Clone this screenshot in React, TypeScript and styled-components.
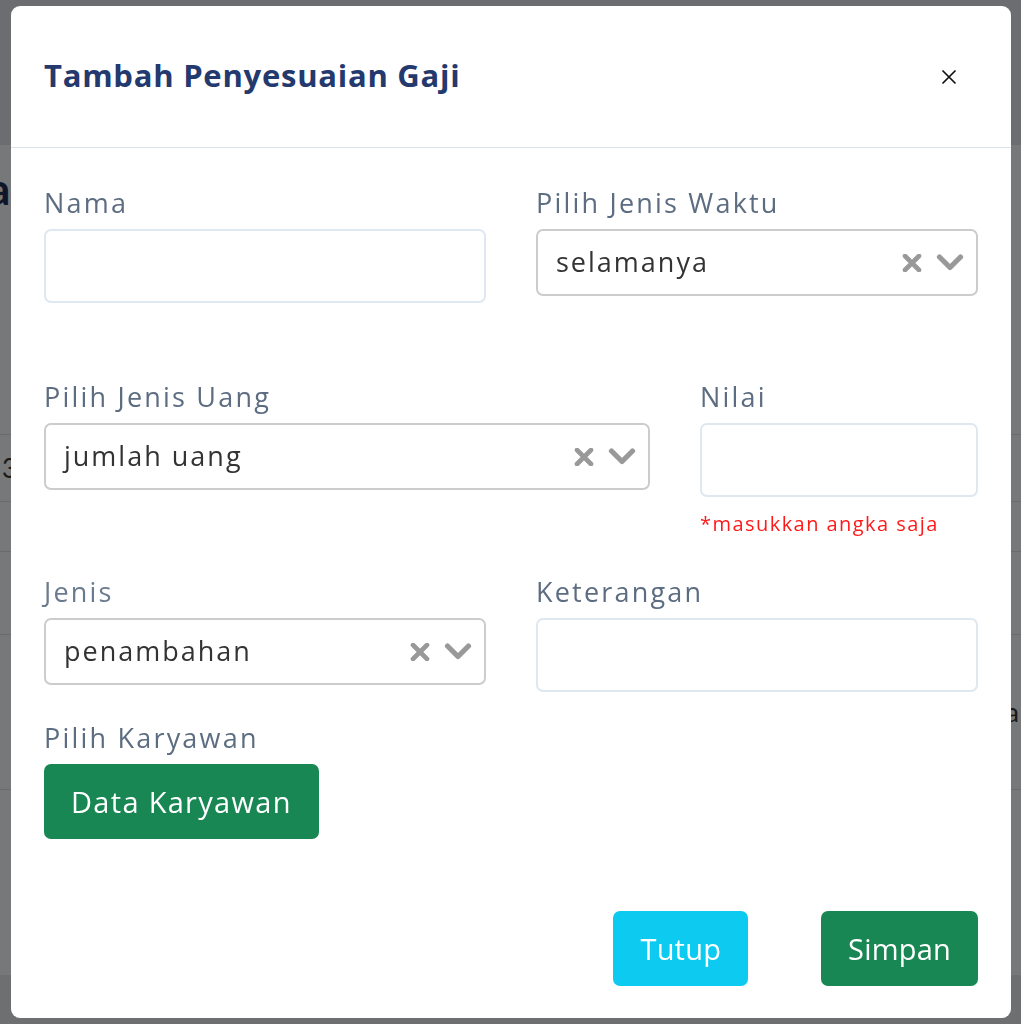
import React from "react";
import styled, { createGlobalStyle } from "styled-components";

const Global = createGlobalStyle`
  html, body { margin: 0; padding: 0; }
  body {
    font-family: "Open Sans", "Noto Sans", "Liberation Sans", sans-serif;
    background: #eef0f4;
    width: 1021px;
    height: 1024px;
    overflow: hidden;
  }
  * { box-sizing: border-box; }
`;

const Page = styled.div`
  width: 1021px;
  height: 1024px;
  display: flex;
  flex-direction: column;
  background: #eef0f4;
`;

const PageTop = styled.div`
  height: 145px;
  background: #d9dbe1;
`;

const PageHeading = styled.div`
  height: 85px;
  display: flex;
  align-items: center;
  font-size: 44px;
  font-weight: 700;
  color: #1f2d55;
  margin-left: -12px;
  font-family: "Lato", sans-serif;
`;

const TableRow = styled.div<{ $h: number; $end?: boolean }>`
  height: ${(p) => p.$h}px;
  border-bottom: 1px solid #d2d4d9;
  display: flex;
  align-items: center;
  justify-content: ${(p) => (p.$end ? "flex-end" : "flex-start")};
  font-size: 26px;
  color: #333;
  padding: 0 2px;
  font-family: "Lato", sans-serif;
`;

const Spacer = styled.div<{ $h: number }>`
  height: ${(p) => p.$h}px;
`;

const PageFooter = styled.div`
  flex: 1;
  background: #dcdee3;
`;

const Overlay = styled.div`
  position: fixed;
  inset: 0;
  background: rgba(0, 0, 0, 0.5);
  display: flex;
  align-items: flex-start;
  padding: 6px 0 0 11px;
`;

const Modal = styled.div`
  width: 1000px;
  height: 1012px;
  background: #fff;
  border-radius: 9px;
  display: flex;
  flex-direction: column;
`;

const Header = styled.div`
  height: 142px;
  flex-shrink: 0;
  padding: 0 33px 4px 33px;
  display: flex;
  align-items: center;
  justify-content: space-between;
  border-bottom: 1px solid #dde3ea;
`;

const Title = styled.h5`
  margin: 0;
  font-size: 31px;
  font-weight: 700;
  color: #243a6e;
  letter-spacing: 0.75px;
`;

const CloseButton = styled.button`
  border: none;
  background: transparent;
  padding: 0;
  width: 24px;
  height: 24px;
  display: flex;
  align-items: center;
  justify-content: center;
  margin: 4px 17px 0 0;
  cursor: pointer;
`;

const Body = styled.div`
  padding: 37px 33px 0 33px;
  display: flex;
  flex-direction: column;
`;

const Row = styled.div<{ $cols: string; $mb: number }>`
  display: grid;
  grid-template-columns: ${(p) => p.$cols};
  column-gap: 50px;
  align-items: start;
  margin-bottom: ${(p) => p.$mb}px;
`;

const Field = styled.div`
  display: flex;
  flex-direction: column;
`;

const Label = styled.label<{ $light?: boolean }>`
  font-size: 27px;
  line-height: 36px;
  color: ${(p) => (p.$light ? "#6b7b8f" : "#5d6d81")};
  margin-bottom: 8px;
  letter-spacing: 2.2px;
`;

const Input = styled.input`
  height: 74px;
  border: 2px solid #dfe7f0;
  border-radius: 7px;
  font-size: 26px;
  padding: 0 20px;
  outline: none;
  font-family: inherit;
`;

const SelectBox = styled.div`
  height: 67px;
  border: 2px solid #cccccc;
  border-radius: 7px;
  display: flex;
  align-items: center;
  padding: 0 12px 0 18px;
`;

const SelectValue = styled.span`
  flex: 1;
  font-size: 27px;
  color: #333333;
  letter-spacing: 2px;
  margin-top: -2px;
`;

const Indicators = styled.div`
  display: flex;
  align-items: center;
  gap: 14px;
`;

const ErrorText = styled.div`
  margin-top: 13px;
  font-size: 20px;
  line-height: 28px;
  color: #ff1a1a;
  letter-spacing: 1.45px;
`;

const Button = styled.button<{ $variant: "green" | "cyan"; $ls?: number }>`
  height: 75px;
  padding: 0 27px;
  border: none;
  border-radius: 7px;
  font-size: 29px;
  font-family: inherit;
  color: #fff;
  letter-spacing: ${(p) => p.$ls ?? 0.2}px;
  background: ${(p) => (p.$variant === "green" ? "#198754" : "#0dcaf0")};
  cursor: pointer;
`;

const ButtonWrap = styled.div`
  display: flex;
`;

const Footer = styled.div`
  margin-top: 72px;
  padding: 0 33px;
  display: flex;
  justify-content: flex-end;
  gap: 73px;
`;

const Cross = () => (
  <svg width="20" height="18" viewBox="0 0 20 18">
    <path d="M3 2 L17 16 M17 2 L3 16" stroke="#999" strokeWidth="4.6" strokeLinecap="round" />
  </svg>
);

const Chevron = () => (
  <svg width="28" height="19" viewBox="0 0 28 19">
    <path d="M3.5 4 L14 14.5 L24.5 4" stroke="#999" strokeWidth="5.2" strokeLinecap="round" strokeLinejoin="round" fill="none" />
  </svg>
);

const Select = ({ value }: { value: string }) => (
  <SelectBox>
    <SelectValue>{value}</SelectValue>
    <Indicators>
      <Cross />
      <Chevron />
    </Indicators>
  </SelectBox>
);

export default function App() {
  return (
    <>
      <Global />
      <Page>
        <PageTop />
        <PageHeading>a</PageHeading>
        <Spacer $h={190} />
        <TableRow $h={15} />
        <TableRow $h={67}>3</TableRow>
        <TableRow $h={50} />
        <TableRow $h={83} />
        <TableRow $h={155} $end>a</TableRow>
        <Spacer $h={185} />
        <PageFooter />
      </Page>
      <Overlay>
        <Modal>
          <Header>
            <Title>Tambah Penyesuaian Gaji</Title>
            <CloseButton aria-label="close">
              <svg width="16" height="16" viewBox="0 0 16 16">
                <path d="M1.5 1.5 L14.5 14.5 M14.5 1.5 L1.5 14.5" stroke="#111" strokeWidth="1.7" />
              </svg>
            </CloseButton>
          </Header>
          <Body>
            <Row $cols="442px 442px" $mb={76}>
              <Field>
                <Label>Nama</Label>
                <Input />
              </Field>
              <Field>
                <Label>Pilih Jenis Waktu</Label>
                <Select value="selamanya" />
              </Field>
            </Row>
            <Row $cols="606px 278px" $mb={36}>
              <Field>
                <Label>Pilih Jenis Uang</Label>
                <Select value="jumlah uang" />
              </Field>
              <Field>
                <Label>Nilai</Label>
                <Input />
                <ErrorText>*masukkan angka saja</ErrorText>
              </Field>
            </Row>
            <Row $cols="442px 442px" $mb={28}>
              <Field>
                <Label $light>Jenis</Label>
                <Select value="penambahan" />
              </Field>
              <Field>
                <Label>Keterangan</Label>
                <Input />
              </Field>
            </Row>
            <Field>
              <Label>Pilih Karyawan</Label>
              <ButtonWrap>
                <Button $variant="green" $ls={1.3}>Data Karyawan</Button>
              </ButtonWrap>
            </Field>
          </Body>
          <Footer>
            <Button $variant="cyan">Tutup</Button>
            <Button $variant="green">Simpan</Button>
          </Footer>
        </Modal>
      </Overlay>
    </>
  );
}
